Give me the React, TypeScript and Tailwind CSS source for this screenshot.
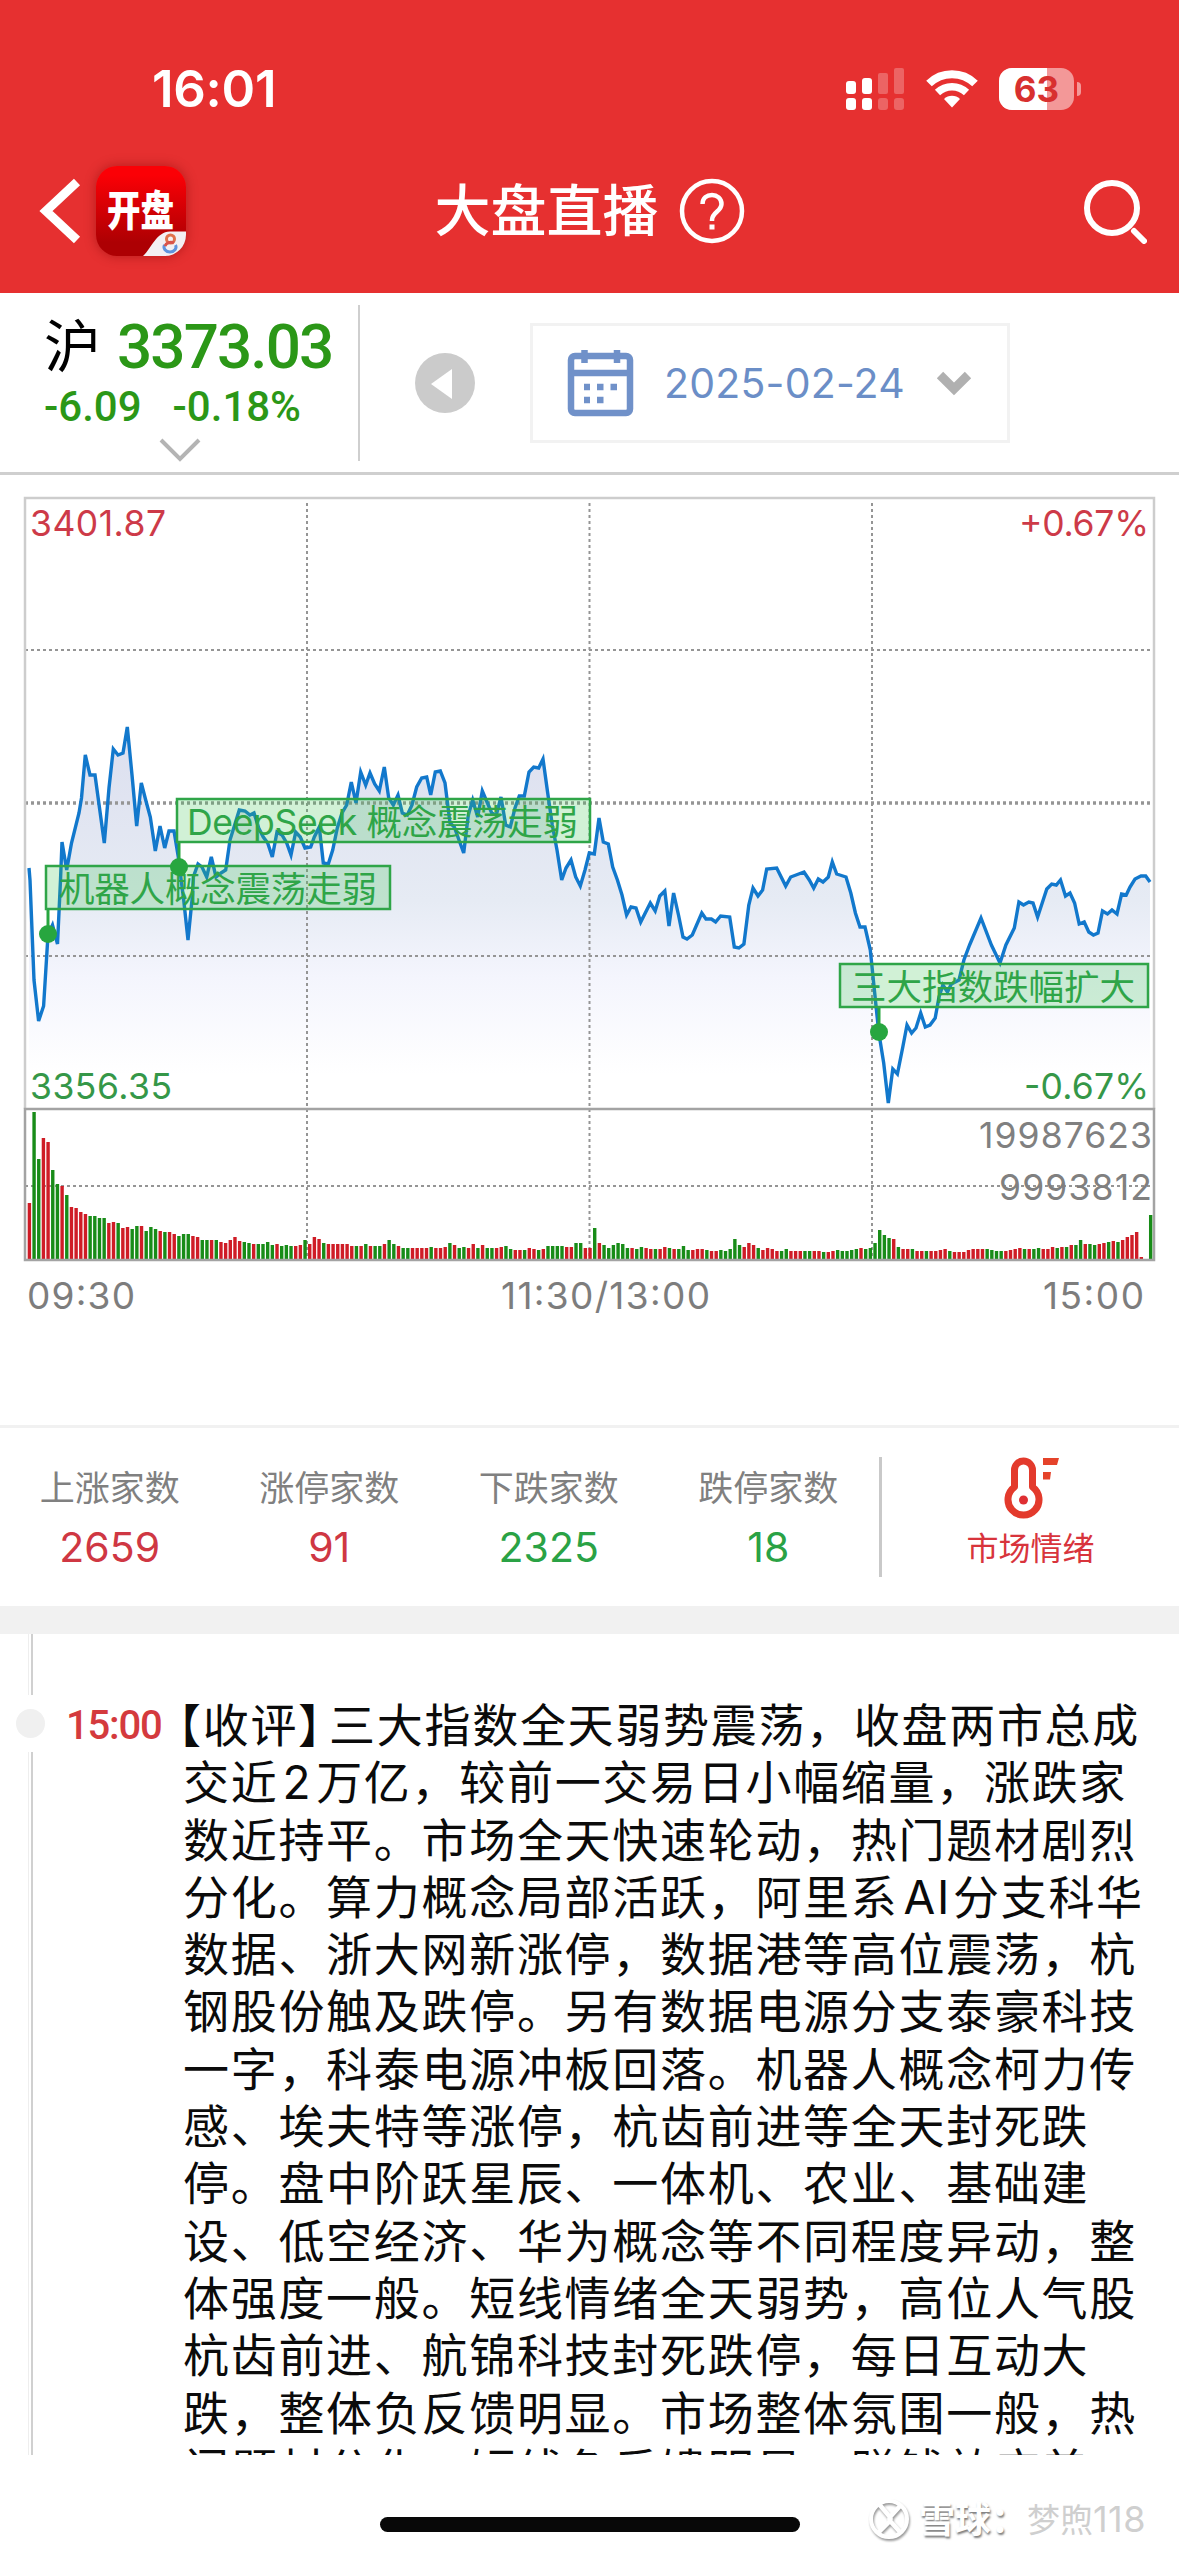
import type { ReactNode } from "react";

const FRAME = { left: 25, right: 1154, top: 498, split: 1109, bottom: 1260 };

// index price, one vertex per visible turn of the line
const pricePoints =
  "29,868 30,880 34,980 38.6,1021 43.6,1006 48,935 52.5,925 57.5,944 60.5,880 62,842 66.7,870 71.5,843 79,813 81.5,798 85.3,755 90,775 95,775 104.3,843 109,788 113.3,749 118,755 123,753 127.3,727 132,775 136.7,826 141.3,783 145.7,800 150.3,817 155.3,851 160,826 164.7,848 169,831 174,831 178.3,857 183.7,900 188,940 192.5,895 193.3,877 198,864 202,867 206.7,877 211.3,857 216,877 221,873 225.7,870 230,840 239.3,810 245,811 250,815 254,813 258.7,828 263.3,837 267.7,843 272.3,857 277,832 282,835 286.7,843 291,855 295.7,832 300.3,837 305,848 310.7,847 314.3,837 319.3,827 323.3,863 328.3,864 332.7,850 337.3,828 342,813 346.7,805 351.3,782 356,803 360.7,772 365.7,785 370,773 374.7,784 379.3,791 384.3,767 388.7,798 393.3,805 398,795 402.3,813 407.3,815 412,805 416.7,787 421.7,778 426.7,777 430.7,795 435.3,772 440.3,771 445,783 450,823 454.3,827 459,840 463.7,853 468.3,815 472.7,800 477.7,817 482.3,791 487,802 491.7,813 496.3,815 501,797 505.7,825 510.3,827 515,808 519.3,796 524.3,796 529,772 533.7,767 538.7,768 543,759 547.7,793 552.3,825 557,850 561.7,880 566,868 571,860 575.7,877 580.3,886 585,870 589.3,853 594.3,854 599,818 603.3,842 608.3,844 612.7,867 617.4,880 622,895 626.6,915 631,907 636,908 640.7,922 650.3,903 655.2,911 659.8,896 664.8,891 669,926 673.6,893 678.5,915 683,937 687,939 692.3,935 701.8,913 706,919 711.4,919 715.6,922 720.6,916 729.7,917 734.3,947 738.9,948 743.9,944 748.8,905 753,888 758,896 762.6,890 766.7,869 776.7,868 785.7,886 790.7,877 804,872 809.3,880 813.7,888 818.3,879 823,882 828.3,877 832.3,862 836.7,874 846,877 850.8,893 855.4,913 860,927 865,927 870.3,950 878.7,1032 883.7,1063 888.3,1103 892.8,1069 897.4,1074 902.8,1047 907,1025 911.6,1033 916,1028 920.7,1013 925.3,1027 930,1025 935.2,1018 939,997 942.9,985 947.5,992 951.3,984 959,980 963.9,960 969.6,945 981,918 991.4,945 1000,963 1005.9,945 1014.3,928 1018.9,902 1023.5,905 1028.8,902 1033,903 1037.6,917 1042.2,903 1046.8,889 1051.7,884 1056.3,885 1060.5,880 1065.5,896 1070,893 1074.6,903 1079.2,924 1084.2,922 1088.8,932 1093.4,935 1098,933 1102.5,911 1107.5,914 1112,910 1117,914 1121.6,894 1126.2,895 1130,887 1135,879 1141,876 1145.7,876 1150,882";

// per-minute volume: r = up, g = down, number = bar height
const volumes =
  "r56 g147 g100 r121 r117 g89 g75 r73 g64 r52 r51 r47 r45 g43 g43 g41 g41 r36 r37 g36 r31 r32 g30 g33 r33 g28 g32 g30 r28 g27 r27 r25 g23 g25 g25 r23 r22 g19 g19 r19 g19 r17 r16 r19 r22 r18 g17 g16 r15 g15 g15 g17 g14 r15 g13 g14 g13 r13 r14 g19 r15 r22 r20 g16 r15 r15 r15 r15 r15 r13 g13 r13 g15 r13 g13 g13 r15 g19 g15 r13 g11 g11 r11 r11 r11 r11 g12 r11 r11 r12 g16 r14 g11 g12 r11 r15 g11 r14 g11 g11 r11 r12 g13 g10 r9 r9 g9 r11 r10 g9 r10 g13 g13 g13 g13 r12 r12 g16 g16 r11 r11 g31 r16 g14 g11 g14 g16 g15 g11 r11 g10 g12 r11 r10 g10 r10 r12 g11 r10 g10 g13 g9 r9 r10 r10 g9 r8 r8 g9 g8 g10 g20 g14 r12 r16 r14 g11 r9 r11 r10 r8 g8 g10 r8 r8 r8 g8 g8 r8 r8 g7 r7 r8 g9 g8 g8 g9 g10 r11 g10 g11 g16 g29 g24 g21 r20 g12 r10 r10 g10 r8 r8 g8 r8 r8 r9 r10 g8 r7 r7 r7 r9 r10 r10 r10 g10 g9 g8 g8 r8 r9 r10 r11 g10 r10 g10 g11 r10 r10 r12 g11 r12 g12 r14 g14 g19 r15 g15 g14 r15 r16 g17 r18 g17 r19 r22 r24 r27 r2 r0 g44".split(
    " ",
  );

const stats = [
  { label: "上涨家数", value: "2659", up: true },
  { label: "涨停家数", value: "91", up: true },
  { label: "下跌家数", value: "2325", up: false },
  { label: "跌停家数", value: "18", up: false },
];

const reviewLines: ReactNode[] = [
  <>
    <span className="-ml-[5px] [font-feature-settings:'halt']">【</span>收评
    <span className="tracking-[8px] [font-feature-settings:'halt']">】</span>三大指数全天弱势震荡，收盘两市总成
  </>,
  <>
    交近<span className="mx-1">2</span>万亿，较前一交易日小幅缩量，涨跌家
  </>,
  "数近持平。市场全天快速轮动，热门题材剧烈",
  <>
    分化。算力概念局部活跃，阿里系<span className="mr-[2px] ml-[5px]">AI</span>分支科华
  </>,
  "数据、浙大网新涨停，数据港等高位震荡，杭",
  "钢股份触及跌停。另有数据电源分支泰豪科技",
  "一字，科泰电源冲板回落。机器人概念柯力传",
  "感、埃夫特等涨停，杭齿前进等全天封死跌",
  "停。盘中阶跃星辰、一体机、农业、基础建",
  "设、低空经济、华为概念等不同程度异动，整",
  "体强度一般。短线情绪全天弱势，高位人气股",
  "杭齿前进、航锦科技封死跌停，每日互动大",
  "跌，整体负反馈明显。市场整体氛围一般，热",
  "门题材分化，短线负反馈明显，赚钱效应差",
];

function StatusBar() {
  return (
    <div className="flex h-[135px] items-end justify-between pr-[98px] pb-[12px] pl-[152px]">
      <span className="text-[51px] leading-[68px] font-semibold tracking-[-0.300px]">16:01</span>
      <div className="flex h-[68px] items-center gap-[21px]">
        <svg width="60" height="42" viewBox="0 0 60 42" fill="#fff">
          <rect x="1" y="13" width="10" height="13" rx="3" />
          <rect x="17" y="10" width="10" height="16" rx="3" />
          <rect x="33" y="5" width="10" height="21" rx="2" opacity=".25" />
          <rect x="49" y="0" width="10" height="26" rx="2" opacity=".25" />
          <rect x="1" y="30" width="10" height="12" rx="3" />
          <rect x="17" y="30" width="10" height="12" rx="3" />
          <rect x="33" y="30" width="10" height="12" rx="3" opacity=".25" />
          <rect x="49" y="30" width="10" height="12" rx="3" opacity=".25" />
        </svg>
        <svg width="52" height="38" viewBox="0 0 52 38" fill="none" stroke="#fff">
          <path d="M3 13.5a33 33 0 0 1 46 0" strokeWidth="8" />
          <path d="M11.5 22.5a21 21 0 0 1 29 0" strokeWidth="7.5" />
          <path d="M18 29a11.5 11.5 0 0 1 16 0L26 37.5Z" fill="#fff" stroke="none" />
        </svg>
        <div className="flex items-center gap-[3px]">
          <div className="relative flex h-[42px] w-[75px] items-center justify-center overflow-hidden rounded-[13px] bg-white/50">
            <div className="absolute inset-y-0 left-0 w-[48px] bg-white" />
            <span className="relative text-[35px] leading-none font-bold text-[#d8302f]">63</span>
          </div>
          <div className="h-[14px] w-[4px] rounded-r-full bg-white/50" />
        </div>
      </div>
    </div>
  );
}

function AppBadge() {
  return (
    <svg width="90" height="90" viewBox="0 0 90 90" className="rounded-[21px] shadow-[0_0_12px_rgba(120,0,0,0.45)]">
      <defs>
        <linearGradient id="badge" x1="0" y1="0" x2="0" y2="1">
          <stop offset="0.1" stopColor="#fb0006" />
          <stop offset="0.85" stopColor="#ad0003" />
        </linearGradient>
      </defs>
      <rect width="90" height="90" fill="url(#badge)" />
      <path d="M47 90C56 82 60 66 74 65.500H90V90Z" fill="#f3eff2" />
      <text
        x="11"
        y="60"
        fontSize="42"
        fontWeight="900"
        fill="#fff"
        textLength="67"
        lengthAdjust="spacingAndGlyphs"
        className="font-['Noto_Sans_CJK_SC',sans-serif]"
      >
        开盘
      </text>
      <g fill="none" strokeWidth="3">
        <circle cx="74.500" cy="73" r="4" stroke="#e0714b" />
        <path d="M68.500 79a6 5 0 1 0 11 0" stroke="#5f93dd" />
        <path d="M69 80a6 5 0 0 1 9-3" stroke="#d9534a" />
      </g>
    </svg>
  );
}

function Header() {
  return (
    <header className="h-[293px] bg-[#e63030] text-white">
      <StatusBar />
      <div className="grid h-[152px] grid-cols-[1fr_auto_1fr] items-center pr-8 pl-8">
        <div className="flex items-center gap-[13px] pl-1">
          <svg width="47" height="66" viewBox="0 0 47 66" fill="none" stroke="#fff" strokeWidth="9">
            <path d="M41 4 10 33l31 29" />
          </svg>
          <AppBadge />
        </div>
        <div className="flex items-center justify-center gap-5">
          <h1 className="text-[56px] leading-none font-medium whitespace-nowrap">大盘直播</h1>
          <svg width="66" height="66" viewBox="0 0 66 66" fill="none" stroke="#fff">
            <circle cx="33" cy="33" r="30" strokeWidth="4.500" />
            <path
              d="M23.500 26c0-6 4.500-9 9.500-9s9.500 3.500 9.500 9c0 7.500-9.500 8-9.500 16v1"
              strokeWidth="4.500"
            />
            <rect x="30.500" y="46.500" width="5" height="5" fill="#fff" stroke="none" />
          </svg>
        </div>
        <svg width="64" height="66" viewBox="0 0 64 66" fill="none" stroke="#fff" className="justify-self-end">
          <circle cx="29" cy="30" r="25" strokeWidth="6" />
          <path d="m51 53 10 10" strokeWidth="6" strokeLinecap="round" />
        </svg>
      </div>
    </header>
  );
}

function QuoteBar() {
  return (
    <section className="flex h-[182px] border-b-3 border-[#cfcfcf]">
      <div className="mt-3 h-[156px] w-[360px] border-r-2 border-[#cfcfcf] pl-[44px] font-['Roboto','Noto_Sans_CJK_SC',sans-serif] text-[#2b9717]">
        <div className="flex h-[82px] items-center pt-[2px]">
          <span className="text-[57px] leading-none text-black">沪</span>
          <span className="ml-[16px] text-[62px] leading-none font-medium tracking-[-1.900px]">3373.03</span>
        </div>
        <div className="flex h-[40px] items-center gap-[31px] text-[42px] leading-none font-medium">
          <span>-6.09</span>
          <span>-0.18%</span>
        </div>
        <svg width="44" height="26" viewBox="0 0 44 26" className="mt-[10px] ml-[114px]" fill="none" stroke="#b4b4b4" strokeWidth="4">
          <path d="M3 3l19 19L41 3" />
        </svg>
      </div>
      <button type="button" aria-label="前一交易日" className="mt-[60px] ml-[55px] h-[60px] w-[60px]">
        <svg viewBox="0 0 60 60">
          <circle cx="30" cy="30" r="30" fill="#cbcbcb" />
          <path d="M16 31 37 16v30Z" fill="#fff" />
        </svg>
      </button>
      <button
        type="button"
        className="mt-[30px] ml-[55px] flex h-[120px] w-[480px] items-center border-3 border-[#f2f2f2] pl-[34px]"
      >
        <svg width="67" height="67" viewBox="0 0 67 67" fill="none" stroke="#7091c9">
          <rect x="4" y="6" width="59" height="57" rx="4" strokeWidth="6.500" />
          <path d="M4 23h59" strokeWidth="6.500" />
          <path d="M17.500 0v13M50 0v13" strokeWidth="6.500" />
          <path d="M17 37h6m7 0h6.500m7 0H50M17 50h6m7 0h6.500" strokeWidth="6.500" />
        </svg>
        <span className="ml-[30px] text-[41px] leading-none tracking-[0.200px] text-[#6b8ec7]">2025-02-24</span>
        <svg width="36" height="26" viewBox="0 0 36 26" className="ml-[31px]" fill="none" stroke="#b0b0b0" strokeWidth="9">
          <path d="M4 5l14 14L32 5" />
        </svg>
      </button>
    </section>
  );
}

type EventTagProps = {
  x: number;
  y: number;
  width: number;
  text: string;
  textX: number;
  textWidth: number;
  dotX: number;
  dotY: number;
};

function EventTag({ x, y, width, text, textX, textWidth, dotX, dotY }: EventTagProps) {
  return (
    <g>
      <path d={`M${dotX} ${y + 44}V${dotY}`} stroke="#27a63f" strokeWidth="3" />
      <circle cx={dotX} cy={dotY} r="9" fill="#27a63f" />
      <rect x={x} y={y} width={width} height="43" fill="#3fc455" fillOpacity=".24" stroke="#2fa548" strokeWidth="2.500" />
      <text x={textX} y={y + 36} fontSize="35.500" fill="#2fa548" textLength={textWidth}>
        {text}
      </text>
    </g>
  );
}

function MarketChart() {
  const { left, right, top, split, bottom } = FRAME;
  return (
    <section className="h-[950px]">
      <svg width="1179" height="951" viewBox="0 475 1179 951">
        <defs>
          <linearGradient id="area" gradientUnits="userSpaceOnUse" x1="0" y1="727" x2="0" y2="1075">
            <stop offset="0" stopColor="#dcdfef" />
            <stop offset="0.5" stopColor="#e6ebf4" />
            <stop offset="0.72" stopColor="#f4f5fd" />
            <stop offset="1" stopColor="#ffffff" />
          </linearGradient>
        </defs>

        <path d={`M29,1108 L${pricePoints} L1150,1108Z`} fill="url(#area)" />

        <g fill="none" stroke="#959595" strokeWidth="2" strokeDasharray="3 3">
          <path d={`M${left} 650H${right}M${left} 956H${right}M${left} 1186H${right}`} />
          <path d={`M${left} 803H${right}`} strokeWidth="3.500" />
          <path d={`M307 ${top + 5}V${bottom}M589.500 ${top + 5}V${bottom}M872 ${top + 5}V${bottom}`} />
        </g>
        <path d={`M${left} ${split}V${top}H${right}V${split}`} fill="none" stroke="#cdcdcd" strokeWidth="2.500" />

        {volumes.map((v, i) => {
          const height = Number(v.slice(1));
          return (
            <rect
              key={i}
              x={27.7 + i * 4.672}
              y={1259 - height}
              width="3.400"
              height={height}
              fill={v[0] === "r" ? "#cf1c26" : "#188c18"}
            />
          );
        })}
        <rect x={left} y={split} width={right - left} height={bottom - split} fill="none" stroke="#a3a3a3" strokeWidth="2.500" />

        <polyline points={pricePoints} fill="none" stroke="#1278cc" strokeWidth="3.400" strokeLinejoin="miter" />

        <g fontSize="35.500">
          <g fill="#cd3a48">
            <text x="30" y="535.500" textLength="136">3401.87</text>
            <text x="1149" y="535.500" textAnchor="end" textLength="130">+0.67%</text>
          </g>
          <g fill="#359748">
            <text x="30" y="1098.500" textLength="142">3356.35</text>
            <text x="1149" y="1098.500" textAnchor="end" textLength="125">-0.67%</text>
          </g>
          <g fill="#808080">
            <text x="1152" y="1147.500" textAnchor="end" textLength="173">19987623</text>
            <text x="1152" y="1199.500" textAnchor="end" textLength="153">9993812</text>
          </g>
        </g>
        <g fontSize="37" fill="#7d7d7d">
          <text x="27" y="1309" textLength="108">09:30</text>
          <text x="501" y="1309" textLength="209">11:30/13:00</text>
          <text x="1144" y="1309" textAnchor="end" textLength="101">15:00</text>
        </g>

        <EventTag x={46} y={866} width={344} text="机器人概念震荡走弱" textX={59} textWidth={318} dotX={48} dotY={934} />
        <EventTag x={177} y={799} width={413} text="DeepSeek 概念震荡走弱" textX={187} textWidth={391} dotX={179} dotY={867} />
        <EventTag x={840} y={964} width={308} text="三大指数跌幅扩大" textX={851} textWidth={284} dotX={879} dotY={1032} />
      </svg>
    </section>
  );
}

function Breadth() {
  return (
    <section className="flex h-[181px] items-center border-t-3 border-[#f1f1f1]">
      <div className="grid w-[878px] grid-cols-4">
        {stats.map((s) => (
          <div key={s.label} className="flex flex-col items-center">
            <span className="text-[35px] leading-[60px] text-[#808080]">{s.label}</span>
            <span className={`text-[41px] leading-[58px] ${s.up ? "text-[#cf3743]" : "text-[#2aa245]"}`}>{s.value}</span>
          </div>
        ))}
      </div>
      <div className="ml-px h-[120px] w-[3px] bg-[#c9c9c9]" />
      <div className="flex flex-1 flex-col items-center text-[#d8343c]">
        <svg width="60" height="64" viewBox="0 0 60 64" className="ml-[3px]">
          <path
            d="M12.500 30V13a9 9 0 0 1 18 0V30a15.500 15.500 0 1 1-18 0Z"
            fill="none"
            stroke="#e33a2c"
            strokeWidth="7"
            strokeLinejoin="round"
          />
          <circle cx="21.500" cy="43" r="4.500" fill="#df2f33" />
          <path d="M41 1H57L55 8H41ZM41 15h8l-1 7.500h-7Z" fill="#e5432a" />
        </svg>
        <span className="text-[32px] leading-[56px]">市场情绪</span>
      </div>
    </section>
  );
}

function Review() {
  return (
    <section className="flex h-[821px] overflow-hidden">
      <div className="flex w-[60px] shrink-0 flex-col items-center">
        <div className="h-[61px] w-[5px] border-r-2 border-l border-r-[#d0d0d0] border-l-[#eeeeee]" />
        <div className="my-[14px] h-[29px] w-[29px] shrink-0 rounded-full bg-[#f0f0f0]" />
        <div className="w-[5px] flex-1 border-r-2 border-l border-r-[#d0d0d0] border-l-[#eeeeee]" />
      </div>
      <time className="mt-[63px] w-[123px] shrink-0 pl-[6px] font-['Roboto',sans-serif] text-[40px] leading-[58px] font-medium tracking-[-1.200px] text-[#d43a3d]">
        15:00
      </time>
      <div className="mt-[63px] text-[46px] leading-[57.300px] tracking-[1.700px] whitespace-nowrap text-[#0b0b0b]">
        {reviewLines.map((line, i) => (
          <p key={i}>{line}</p>
        ))}
      </div>
    </section>
  );
}

function Footer() {
  return (
    <footer className="relative flex h-[101px] justify-center pt-[62px]">
      <div className="h-[15px] w-[420px] rounded-full bg-[#080808]" />
      {/* author watermark */}
      <div className="absolute right-[33px] bottom-[13px] flex items-center">
        <svg width="46" height="46" viewBox="0 0 46 46" fill="none" className="drop-shadow-[1px_2px_1px_rgba(0,0,0,0.4)]">
          <circle cx="22" cy="22" r="18" stroke="#fff" strokeWidth="4" />
          <path d="M12 7l10 12c2 2 2 4 0 6L11 36M33 9 24 19c-2 2-2 4 0 6l9 10" stroke="#fff" strokeWidth="4.500" />
        </svg>
        <span className="ml-[6px] text-[36px] leading-[46px] font-bold text-white [text-shadow:1px_2px_2px_rgba(0,0,0,0.5)]">雪球：</span>
        <span className="text-[33px] leading-[46px] text-[#cfcfcf]">
          梦煦<span className="text-[36px] tracking-[0.500px]">118</span>
        </span>
      </div>
    </footer>
  );
}

export default function App() {
  return (
    <main className="h-[2556px] w-[1179px] overflow-hidden bg-white font-['Inter','Noto_Sans_CJK_SC',sans-serif]">
      <Header />
      <QuoteBar />
      <MarketChart />
      <Breadth />
      <div className="h-[28px] bg-[#f1f1f1]" />
      <Review />
      <Footer />
    </main>
  );
}
